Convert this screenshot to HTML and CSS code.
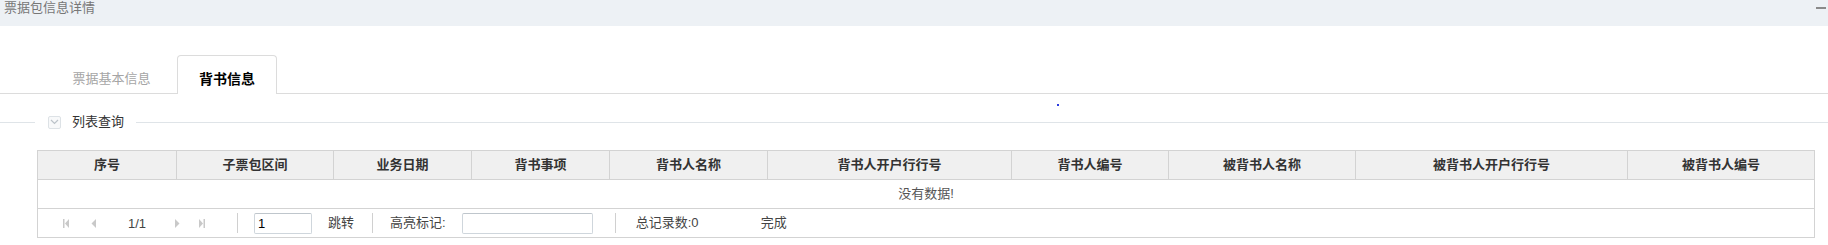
FILE: index.html
```html
<!DOCTYPE html>
<html lang="zh-CN">
<head>
    <meta charset="UTF-8">
    <title>票据包信息详情</title>
    <link rel="stylesheet" href="styles.css">
</head>
<body>
    <div class="title-bar">
        <span class="title">票据包信息详情</span>
        <span class="min-btn"></span>
    </div>

    <div class="tabs">
        <div class="tab">票据基本信息</div>
        <div class="tab active">背书信息</div>
    </div>
    <span class="stray-dot"></span>

    <div class="section-head">
        <span class="line short"></span>
        <span class="toggle">
            <svg width="9" height="6" viewBox="0 0 9 6"><path d="M1 1 L4.5 4.5 L8 1" fill="none" stroke="#bcc3c9" stroke-width="1.2"/></svg>
        </span>
        <span class="section-title">列表查询</span>
        <span class="line long"></span>
    </div>

    <div class="grid-wrap">
        <table class="grid">
            <thead>
                <tr>
                    <th class="c1">序号</th>
                    <th class="c2">子票包区间</th>
                    <th class="c3">业务日期</th>
                    <th class="c4">背书事项</th>
                    <th class="c5">背书人名称</th>
                    <th class="c6">背书人开户行行号</th>
                    <th class="c7">背书人编号</th>
                    <th class="c8">被背书人名称</th>
                    <th class="c9">被背书人开户行行号</th>
                    <th class="c10">被背书人编号</th>
                </tr>
            </thead>
            <tbody>
                <tr>
                    <td colspan="10" class="empty">没有数据!</td>
                </tr>
            </tbody>
        </table>

        <div class="pager">
            <svg class="pg-first" width="6" height="9" viewBox="0 0 6 9"><rect x="0" y="0" width="1.5" height="9" fill="#c9c9c9"/><path d="M6 0 L2 4.5 L6 9 Z" fill="#c9c9c9"/></svg>
            <svg class="pg-prev" width="5" height="9" viewBox="0 0 5 9"><path d="M5 0 L0.5 4.5 L5 9 Z" fill="#c9c9c9"/></svg>
            <span class="pg-num">1/1</span>
            <svg class="pg-next" width="5" height="9" viewBox="0 0 5 9"><path d="M0 0 L4.5 4.5 L0 9 Z" fill="#c9c9c9"/></svg>
            <svg class="pg-last" width="6" height="9" viewBox="0 0 6 9"><path d="M0 0 L4 4.5 L0 9 Z" fill="#c9c9c9"/><rect x="4.5" y="0" width="1.5" height="9" fill="#c9c9c9"/></svg>
            <span class="pg-sep sep-1"></span>
            <input class="pg-input page-input" type="text" value="1">
            <span class="pg-text jump">跳转</span>
            <span class="pg-sep sep-2"></span>
            <span class="pg-text mark-label">高亮标记:</span>
            <input class="pg-input mark-input" type="text" value="">
            <span class="pg-sep sep-3"></span>
            <span class="pg-text total">总记录数:0</span>
            <span class="pg-text done">完成</span>
        </div>
    </div>
</body>
</html>
```

FILE: styles.css
```css
body {
    margin: 0;
    font-family: 'Liberation Sans', 'Noto Sans CJK SC', sans-serif;
    font-size: 13px;
    color: #333;
    background: #fff;
    position: relative;
}

/* title bar */
.title-bar {
    height: 26px;
    background-color: #edf1f5;
    display: flex;
    justify-content: space-between;
    align-items: flex-start;
    padding: 0 2px 0 4px;
}

.title {
    font-size: 13px;
    line-height: 16px;
    color: #777;
}

.min-btn {
    width: 10px;
    height: 2px;
    margin-top: 7px;
    background-color: #8a8a8a;
}

/* tabs */
.tabs {
    display: flex;
    margin-top: 29px;
    padding-left: 46px;
    height: 38px;
    border-bottom: 1px solid #dcdcdc;
}

.tab {
    width: 131px;
    height: 38px;
    box-sizing: border-box;
    padding-top: 10px;
    line-height: 28px;
    text-align: center;
    color: #a5a5a5;
    font-size: 13px;
}

.tab.active {
    width: 100px;
    height: 39px;
    border: 1px solid #dcdcdc;
    border-bottom: none;
    border-radius: 4px 4px 0 0;
    background-color: #fff;
    color: #000;
    font-weight: bold;
    font-size: 14px;
    padding-top: 9px;
}

.stray-dot {
    position: absolute;
    left: 1057px;
    top: 104px;
    width: 2px;
    height: 2px;
    background-color: #2b3ae0;
}

/* section header */
.section-head {
    display: flex;
    align-items: center;
    height: 20px;
    margin-top: 18px;
}

.line {
    height: 1px;
    background-color: #dfe4e8;
}

.line.short {
    width: 35px;
    margin-right: 13px;
}

.line.long {
    flex: 1;
    margin-left: 12px;
}

.toggle {
    width: 13px;
    height: 13px;
    box-sizing: border-box;
    border: 1px solid #dde2e6;
    border-radius: 2px;
    background-color: #f8f9fa;
    display: flex;
    align-items: center;
    justify-content: center;
    margin-right: 11px;
}

.section-title {
    font-size: 13px;
    line-height: 20px;
    color: #333;
}

/* grid */
.grid-wrap {
    margin: 18px 0 0 37px;
    width: 1778px;
    box-sizing: border-box;
    border: 1px solid #d3d3d3;
}

.grid {
    width: 100%;
    border-spacing: 0;
    table-layout: fixed;
}

.grid th {
    box-sizing: border-box;
    height: 29px;
    padding: 0;
    background-color: #f0f0f0;
    border-right: 1px solid #d3d3d3;
    border-bottom: 1px solid #d3d3d3;
    font-weight: bold;
    font-size: 13px;
    color: #333;
    text-align: center;
    line-height: 28px;
}

.grid th.c10 {
    border-right: none;
}

.c1 { width: 139px; }
.c2 { width: 157px; }
.c3 { width: 138px; }
.c4 { width: 138px; }
.c5 { width: 158px; }
.c6 { width: 244px; }
.c7 { width: 157px; }
.c8 { width: 187px; }
.c9 { width: 272px; }

.grid td.empty {
    box-sizing: border-box;
    height: 29px;
    padding: 0;
    border-bottom: 1px solid #d3d3d3;
    text-align: center;
    color: #555;
    line-height: 28px;
}

/* pager */
.pager {
    display: flex;
    align-items: center;
    height: 28px;
    padding-left: 25px;
}

.pg-first { margin-right: 22px; }
.pg-prev { margin-right: 32px; }

.pg-num {
    width: 17px;
    margin-right: 30px;
    color: #444;
}

.pg-next { margin-right: 19px; }
.pg-last { margin-right: 32px; }

.pg-sep {
    width: 1px;
    height: 20px;
    background-color: #d0d0d0;
}

.sep-1 { margin-right: 16px; }
.sep-2 { margin: 0 17px 0 18px; }
.sep-3 { margin: 0 20px 0 22px; }

.pg-input {
    box-sizing: border-box;
    height: 21px;
    margin: 0;
    padding: 0 3px;
    border: 1px solid #cfd6dc;
    border-top-color: #bfc6cc;
    border-radius: 2px;
    font-family: 'Liberation Sans', sans-serif;
    font-size: 13px;
    color: #000;
    outline: none;
}

.page-input {
    width: 58px;
    margin-right: 16px;
}

.mark-input {
    width: 131px;
    margin-left: 16px;
}

.pg-text {
    color: #444;
    line-height: 20px;
}

.total {
    width: 125px;
}
```
